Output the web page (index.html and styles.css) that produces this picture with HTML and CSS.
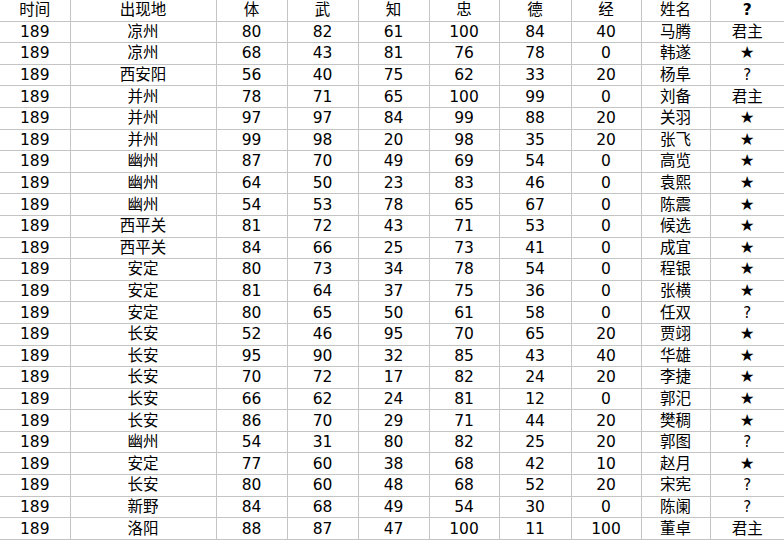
FILE: index.html
```html
<!DOCTYPE html>
<html lang="zh">
<head>
<meta charset="utf-8">
<link rel="stylesheet" href="styles.css">
</head>
<body>
<table class="grid">
<colgroup>
<col class="c1"><col class="c2"><col class="c3"><col class="c3"><col class="c3"><col class="c4"><col class="c5"><col class="c4"><col class="c6"><col class="c7">
</colgroup>
<thead>
<tr><th>时间</th><th>出现地</th><th>体</th><th>武</th><th>知</th><th>忠</th><th>德</th><th>经</th><th>姓名</th><th class="q">?</th></tr>
</thead>
<tbody>
<tr><td>189</td><td>凉州</td><td>80</td><td>82</td><td>61</td><td>100</td><td>84</td><td>40</td><td>马腾</td><td>君主</td></tr>
<tr><td>189</td><td>凉州</td><td>68</td><td>43</td><td>81</td><td>76</td><td>78</td><td>0</td><td>韩遂</td><td class="s">★</td></tr>
<tr><td>189</td><td>西安阳</td><td>56</td><td>40</td><td>75</td><td>62</td><td>33</td><td>20</td><td>杨阜</td><td class="qq">?</td></tr>
<tr><td>189</td><td>并州</td><td>78</td><td>71</td><td>65</td><td>100</td><td>99</td><td>0</td><td>刘备</td><td>君主</td></tr>
<tr><td>189</td><td>并州</td><td>97</td><td>97</td><td>84</td><td>99</td><td>88</td><td>20</td><td>关羽</td><td class="s">★</td></tr>
<tr><td>189</td><td>并州</td><td>99</td><td>98</td><td>20</td><td>98</td><td>35</td><td>20</td><td>张飞</td><td class="s">★</td></tr>
<tr><td>189</td><td>幽州</td><td>87</td><td>70</td><td>49</td><td>69</td><td>54</td><td>0</td><td>高览</td><td class="s">★</td></tr>
<tr><td>189</td><td>幽州</td><td>64</td><td>50</td><td>23</td><td>83</td><td>46</td><td>0</td><td>袁熙</td><td class="s">★</td></tr>
<tr><td>189</td><td>幽州</td><td>54</td><td>53</td><td>78</td><td>65</td><td>67</td><td>0</td><td>陈震</td><td class="s">★</td></tr>
<tr><td>189</td><td>西平关</td><td>81</td><td>72</td><td>43</td><td>71</td><td>53</td><td>0</td><td>候选</td><td class="s">★</td></tr>
<tr><td>189</td><td>西平关</td><td>84</td><td>66</td><td>25</td><td>73</td><td>41</td><td>0</td><td>成宜</td><td class="s">★</td></tr>
<tr><td>189</td><td>安定</td><td>80</td><td>73</td><td>34</td><td>78</td><td>54</td><td>0</td><td>程银</td><td class="s">★</td></tr>
<tr><td>189</td><td>安定</td><td>81</td><td>64</td><td>37</td><td>75</td><td>36</td><td>0</td><td>张横</td><td class="s">★</td></tr>
<tr><td>189</td><td>安定</td><td>80</td><td>65</td><td>50</td><td>61</td><td>58</td><td>0</td><td>任双</td><td class="qq">?</td></tr>
<tr><td>189</td><td>长安</td><td>52</td><td>46</td><td>95</td><td>70</td><td>65</td><td>20</td><td>贾翊</td><td class="s">★</td></tr>
<tr><td>189</td><td>长安</td><td>95</td><td>90</td><td>32</td><td>85</td><td>43</td><td>40</td><td>华雄</td><td class="s">★</td></tr>
<tr><td>189</td><td>长安</td><td>70</td><td>72</td><td>17</td><td>82</td><td>24</td><td>20</td><td>李捷</td><td class="s">★</td></tr>
<tr><td>189</td><td>长安</td><td>66</td><td>62</td><td>24</td><td>81</td><td>12</td><td>0</td><td>郭汜</td><td class="s">★</td></tr>
<tr><td>189</td><td>长安</td><td>86</td><td>70</td><td>29</td><td>71</td><td>44</td><td>20</td><td>樊稠</td><td class="s">★</td></tr>
<tr><td>189</td><td>幽州</td><td>54</td><td>31</td><td>80</td><td>82</td><td>25</td><td>20</td><td>郭图</td><td class="qq">?</td></tr>
<tr><td>189</td><td>安定</td><td>77</td><td>60</td><td>38</td><td>68</td><td>42</td><td>10</td><td>赵月</td><td class="s">★</td></tr>
<tr><td>189</td><td>长安</td><td>80</td><td>60</td><td>48</td><td>68</td><td>52</td><td>20</td><td>宋宪</td><td class="qq">?</td></tr>
<tr><td>189</td><td>新野</td><td>84</td><td>68</td><td>49</td><td>54</td><td>30</td><td>0</td><td>陈阑</td><td class="qq">?</td></tr>
<tr><td>189</td><td>洛阳</td><td>88</td><td>87</td><td>47</td><td>100</td><td>11</td><td>100</td><td>董卓</td><td>君主</td></tr>
</tbody>
</table>
</body>
</html>
```
FILE: styles.css
```css
html, body {
  margin: 0;
  padding: 0;
  background: #ffffff;
}
.grid {
  width: 784px;
  table-layout: fixed;
  border-collapse: collapse;
  font-family: "DejaVu Sans", "Noto Sans CJK SC", sans-serif;
  font-size: 15.5px;
  color: #000;
}
.c1 { width: 70px; }
.c2 { width: 146px; }
.c3 { width: 71px; }
.c4 { width: 70px; }
.c5 { width: 72px; }
.c6 { width: 69px; }
.c7 { width: 74px; }
.grid th, .grid td {
  height: 20.6px;
  padding: 0;
  text-align: center;
  vertical-align: middle;
  font-weight: normal;
  border-right: 1px solid #c4c4c4;
  border-bottom: 1px solid #c4c4c4;
  line-height: 20px;
  white-space: nowrap;
  overflow: hidden;
}
.grid tr > :last-child { border-right: none; }
.grid th.q { font-weight: bold; }
.grid td.qq { font-family: "DejaVu Sans", sans-serif; font-size: 15px; }
.grid td.s { font-size: 16.5px; }
```
